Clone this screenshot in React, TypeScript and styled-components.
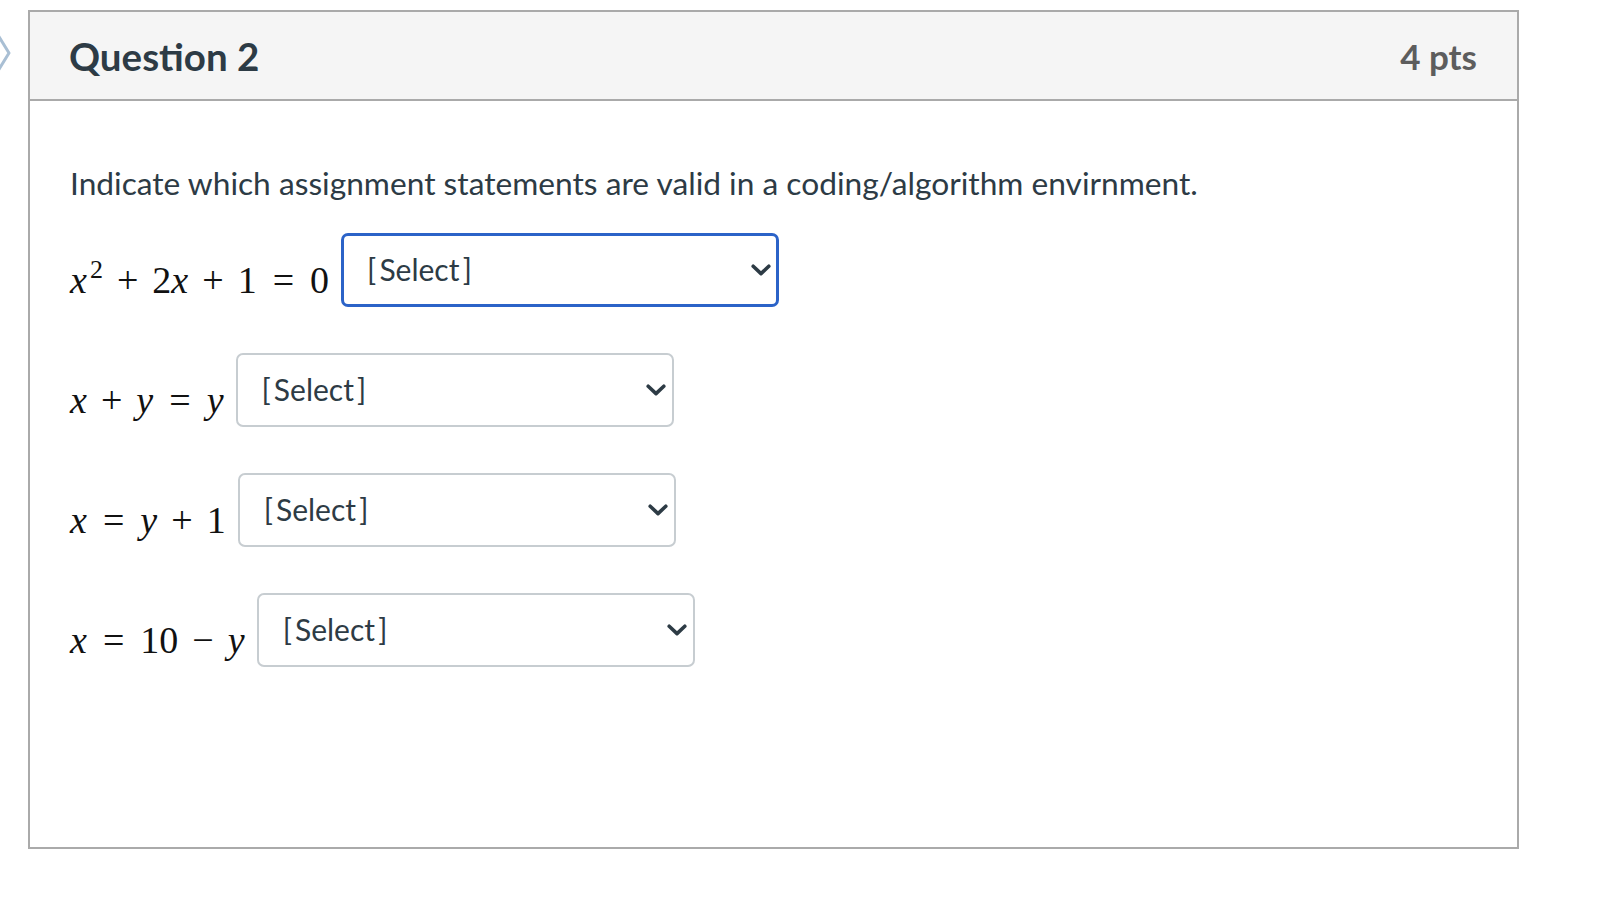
import React from "react";
import styled, { createGlobalStyle, css } from "styled-components";

const GlobalStyle = createGlobalStyle`
  html, body {
    margin: 0;
    padding: 0;
    background: #ffffff;
  }
  body {
    font-family: Lato, "Open Sans", "Liberation Sans", sans-serif;
    color: #2d3b45;
  }
`;

const Page = styled.div`
  display: flex;
  align-items: flex-start;
  padding-top: 10px;
  width: 1598px;
  height: 906px;
  box-sizing: border-box;
  overflow: hidden;
`;

const SideToggle = styled.div`
  width: 28px;
  flex: none;
  padding-top: 24px;
  display: flex;
`;

const Card = styled.section`
  width: 1491px;
  box-sizing: border-box;
  border: 2px solid #aaaaaa;
  background: #ffffff;
`;

const CardHeader = styled.header`
  display: flex;
  align-items: center;
  justify-content: space-between;
  height: 87px;
  padding: 0 40px 0 39px;
  background: #f5f5f5;
  border-bottom: 2px solid #aaaaaa;
`;

const Title = styled.h2`
  margin: 0;
  font-size: 38.5px;
  font-weight: 700;
  color: #2d3b45;
`;

const Points = styled.div`
  font-size: 35px;
  font-weight: 700;
  color: #5d5d5d;
`;

const CardBody = styled.div`
  padding: 60px 40px 180px 40px;
`;

const Prompt = styled.p`
  margin: 0;
  font-size: 31.7px;
  line-height: 45px;
  color: #2d3b45;
`;

const Rows = styled.div`
  display: flex;
  flex-direction: column;
  gap: 46px;
  margin-top: 27px;
`;

const Row = styled.div`
  display: flex;
  align-items: center;
  gap: 12px;
`;

const Math = styled.span`
  font-family: "Liberation Serif", "DejaVu Serif", serif;
  font-size: 38px;
  line-height: 38px;
  margin-top: 20px;
  white-space: nowrap;
  color: #111;
`;

const V = styled.i`
  font-style: italic;
`;

const N = styled.span`
  font-style: normal;
`;

const Sup = styled.sup`
  font-size: 26px;
  vertical-align: 15px;
  line-height: 0;
  margin-left: 3px;
`;

const Op = styled.span<{ $rel?: boolean }>`
  display: inline-block;
  margin: 0 ${(p) => (p.$rel ? "16px" : "14px")};
`;

const SelectBox = styled.div<{ $focused?: boolean }>`
  width: 438px;
  height: 74px;
  box-sizing: border-box;
  display: flex;
  align-items: center;
  justify-content: space-between;
  padding: 0 6px 0 24px;
  border: 2px solid #c7cdd1;
  border-radius: 7px;
  background: #ffffff;
  font-family: Lato, "Open Sans", sans-serif;
  font-size: 30px;
  word-spacing: -4.5px;
  color: #2d3b45;
  cursor: pointer;
  ${(p) =>
    p.$focused &&
    css`
      border: 3px solid #2b63c8;
      padding-left: 23px;
      padding-right: 5px;
    `}
`;

const SelectLabel = styled.span`
  position: relative;
  top: -1px;
`;

const Chevron = () => (
  <svg width="20" height="12" viewBox="0 0 20 12" aria-hidden="true">
    <path
      d="M2.2 2.2 L10 9.6 L17.8 2.2"
      fill="none"
      stroke="#2d3b45"
      strokeWidth="3.6"
      strokeLinecap="round"
      strokeLinejoin="round"
    />
  </svg>
);

const Select = ({ focused }: { focused?: boolean }) => (
  <SelectBox $focused={focused} role="combobox" aria-expanded="false">
    <SelectLabel>[ Select ]</SelectLabel>
    <Chevron />
  </SelectBox>
);

export default function App() {
  return (
    <>
      <GlobalStyle />
      <Page>
        <SideToggle>
          <svg width="14" height="40" viewBox="0 0 14 40" aria-hidden="true">
            <path
              d="M-2 1 L9 19 L-2 37"
              fill="none"
              stroke="#a9bfd4"
              strokeWidth="3"
              strokeLinejoin="round"
            />
          </svg>
        </SideToggle>
        <Card>
          <CardHeader>
            <Title>Question 2</Title>
            <Points>4 pts</Points>
          </CardHeader>
          <CardBody>
            <Prompt>
              Indicate which assignment statements are valid in a coding/algorithm envirnment.
            </Prompt>
            <Rows>
              <Row>
                <Math>
                  <V>x</V>
                  <Sup>2</Sup>
                  <Op>+</Op>
                  <N>2</N>
                  <V>x</V>
                  <Op>+</Op>
                  <N>1</N>
                  <Op $rel>=</Op>
                  <N>0</N>
                </Math>
                <Select focused />
              </Row>
              <Row>
                <Math>
                  <V>x</V>
                  <Op>+</Op>
                  <V>y</V>
                  <Op $rel>=</Op>
                  <V>y</V>
                </Math>
                <Select />
              </Row>
              <Row>
                <Math>
                  <V>x</V>
                  <Op $rel>=</Op>
                  <V>y</V>
                  <Op>+</Op>
                  <N>1</N>
                </Math>
                <Select />
              </Row>
              <Row>
                <Math>
                  <V>x</V>
                  <Op $rel>=</Op>
                  <N>10</N>
                  <Op>−</Op>
                  <V>y</V>
                </Math>
                <Select />
              </Row>
            </Rows>
          </CardBody>
        </Card>
      </Page>
    </>
  );
}
